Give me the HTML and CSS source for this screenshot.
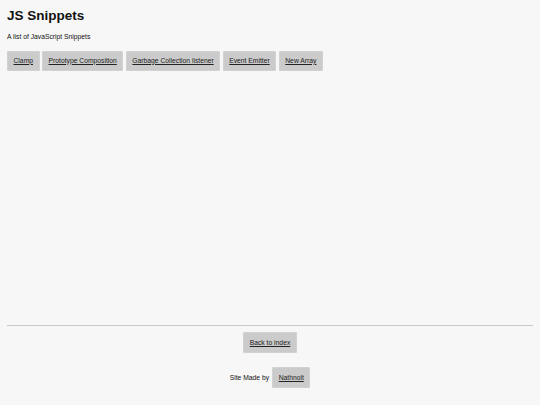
FILE: index.html
```html
<!DOCTYPE html>
<html lang="en">
<head>
<meta charset="utf-8">
<title>JS Snippets</title>
<link rel="stylesheet" href="styles.css">
</head>
<body>
<main class="main">
  <h1 class="title">JS Snippets</h1>
  <p class="subtitle">A list of JavaScript Snippets</p>
  <nav class="snippets">
    <a class="btn" href="#">Clamp</a>
    <a class="btn" href="#">Prototype Composition</a>
    <a class="btn" href="#">Garbage Collection listener</a>
    <a class="btn" href="#">Event Emitter</a>
    <a class="btn" href="#">New Array</a>
  </nav>
</main>
<footer class="footer">
  <a class="btn btn-lg" href="#">Back to index</a>
  <div class="credit">
    <span>Site Made by</span>
    <a class="btn btn-lg" href="#">Nathnolt</a>
  </div>
</footer>
</body>
</html>
```

FILE: styles.css
```css
html, body {
  margin: 0;
  padding: 0;
}
body {
  background: #f7f7f7;
  color: #111;
  font-family: "Liberation Sans", Arial, sans-serif;
  font-size: 6.75px;
  min-height: 100vh;
  display: flex;
  flex-direction: column;
  padding: 0 7px;
  box-sizing: border-box;
}
.main {
  flex: 1;
  padding-top: 8px;
}
.title {
  margin: 0;
  font-size: 13.5px;
  line-height: 16px;
  font-weight: bold;
}
.subtitle {
  margin: 9px 0 0;
  line-height: 8px;
}
.snippets {
  display: flex;
  gap: 2.5px;
  margin-top: 9.5px;
}
.btn {
  display: inline-block;
  background: #cbcbcb;
  color: #222;
  text-decoration: underline;
  padding: 6.25px 6.5px;
  line-height: 8px;
  border-radius: 1.5px;
  box-shadow: inset 0 0 0 0.5px #d8d8d8;
}
.btn-lg {
  padding: 6.5px 6.5px;
}
.footer {
  border-top: 1px solid #c8c8c8;
  display: flex;
  flex-direction: column;
  align-items: center;
  padding: 6px 0 17px;
}
.credit {
  display: flex;
  align-items: center;
  gap: 3px;
  margin-top: 14px;
}
```
